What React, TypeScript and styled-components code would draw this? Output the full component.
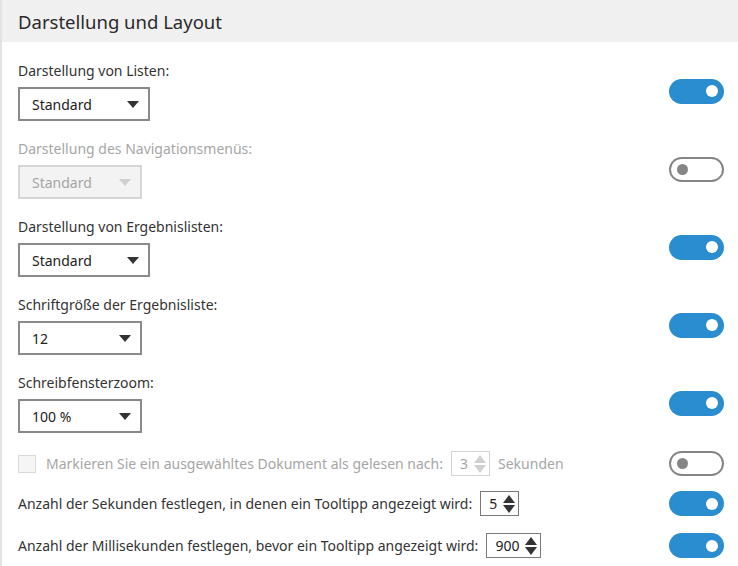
import styled, {createGlobalStyle} from "styled-components"

const GlobalStyle = createGlobalStyle`
    html, body {
        margin: 0;
        padding: 0;
        background: #fff;
    }
    body {
        font-family: "Noto Sans", "Open Sans", sans-serif;
        color: #333;
    }
`

const Panel = styled.div`
    width: 738px;
    height: 566px;
    box-sizing: border-box;
    border-left: 2px solid #e3e3e3;
    overflow: hidden;
`

const Header = styled.div`
    height: 42px;
    display: flex;
    align-items: center;
    padding-left: 16px;
    background: #f0f0f0;
    font-size: 18.5px;
    color: #2b2b2b;
`

const Body = styled.div`
    display: flex;
    flex-direction: column;
    padding: 19px 14px 0 16px;
`

const Row = styled.div<{$space: number}>`
    display: flex;
    align-items: center;
    justify-content: space-between;
    margin-bottom: ${(p) => p.$space}px;
`

const Field = styled.div`
    display: flex;
    flex-direction: column;
    gap: 6px;
`

const Label = styled.div<{$disabled?: boolean}>`
    font-size: 14px;
    line-height: 20px;
    color: ${(p) => (p.$disabled ? "#a6a6a6" : "#333")};
`

const SelectBox = styled.div<{$width: number; $disabled?: boolean}>`
    width: ${(p) => p.$width}px;
    height: 34px;
    box-sizing: border-box;
    border: 2px solid ${(p) => (p.$disabled ? "#d6d6d6" : "#8a8a8a")};
    background: ${(p) => (p.$disabled ? "#f3f3f3" : "#fff")};
    display: flex;
    align-items: center;
    justify-content: space-between;
    padding: 0 9px 0 12px;
    font-size: 14px;
    color: ${(p) => (p.$disabled ? "#a6a6a6" : "#222")};
`

const Caret = styled.span<{$disabled?: boolean}>`
    width: 0;
    height: 0;
    border-left: 6px solid transparent;
    border-right: 6px solid transparent;
    border-top: 7px solid ${(p) => (p.$disabled ? "#d0d0d0" : "#333")};
`

const Toggle = styled.div<{$on: boolean}>`
    width: 55px;
    height: 25px;
    box-sizing: border-box;
    border-radius: 13px;
    flex-shrink: 0;
    display: flex;
    align-items: center;
    justify-content: ${(p) => (p.$on ? "flex-end" : "flex-start")};
    padding: 0 6px;
    background: ${(p) => (p.$on ? "#2a8dd0" : "#fff")};
    border: ${(p) => (p.$on ? "none" : "2px solid #858585")};
`

const Knob = styled.span<{$on: boolean}>`
    width: ${(p) => (p.$on ? 12 : 11)}px;
    height: ${(p) => (p.$on ? 12 : 11)}px;
    border-radius: 50%;
    background: ${(p) => (p.$on ? "#fff" : "#858585")};
`

const Inline = styled.div<{$disabled?: boolean}>`
    display: flex;
    align-items: center;
    gap: 8px;
    font-size: 14px;
    color: ${(p) => (p.$disabled ? "#a6a6a6" : "#333")};
`

const Checkbox = styled.span`
    width: 18px;
    height: 18px;
    box-sizing: border-box;
    border: 1px solid #d9d9d9;
    background: #f5f5f5;
    margin-right: 2px;
`

const NumberBox = styled.div<{$disabled?: boolean}>`
    height: 25px;
    box-sizing: border-box;
    border: 1px solid ${(p) => (p.$disabled ? "#d4d4d4" : "#7a7a7a")};
    display: flex;
    align-items: center;
    gap: 6px;
    padding: 0 3px 0 8px;
    font-size: 14px;
    color: ${(p) => (p.$disabled ? "#a6a6a6" : "#222")};
`

const Spinner = styled.span<{$disabled?: boolean}>`
    display: flex;
    flex-direction: column;
    gap: 2px;

    &::before,
    &::after {
        content: "";
        width: 0;
        height: 0;
        border-left: 6px solid transparent;
        border-right: 6px solid transparent;
    }
    &::before {
        border-bottom: 8px solid ${(p) => (p.$disabled ? "#d0d0d0" : "#333")};
    }
    &::after {
        border-top: 8px solid ${(p) => (p.$disabled ? "#d0d0d0" : "#333")};
    }
`

type SelectRow = {
    label: string
    value: string
    width: number
    on: boolean
    disabled?: boolean
}

const selectRows: SelectRow[] = [
    {label: "Darstellung von Listen:", value: "Standard", width: 132, on: true},
    {
        label: "Darstellung des Navigationsmenüs:",
        value: "Standard",
        width: 124,
        on: false,
        disabled: true,
    },
    {label: "Darstellung von Ergebnislisten:", value: "Standard", width: 132, on: true},
    {label: "Schriftgröße der Ergebnisliste:", value: "12", width: 124, on: true},
    {label: "Schreibfensterzoom:", value: "100 %", width: 124, on: true},
]

const Switch = ({on}: {on: boolean}) => (
    <Toggle $on={on}>
        <Knob $on={on} />
    </Toggle>
)

export default function App() {
    return (
        <>
            <GlobalStyle />
            <Panel>
                <Header>Darstellung und Layout</Header>
                <Body>
                    {selectRows.map((r) => (
                        <Row key={r.label} $space={18}>
                            <Field>
                                <Label $disabled={r.disabled}>{r.label}</Label>
                                <SelectBox $width={r.width} $disabled={r.disabled}>
                                    {r.value}
                                    <Caret $disabled={r.disabled} />
                                </SelectBox>
                            </Field>
                            <Switch on={r.on} />
                        </Row>
                    ))}
                    <Row $space={15}>
                        <Inline $disabled>
                            <Checkbox />
                            Markieren Sie ein ausgewähltes Dokument als gelesen nach:
                            <NumberBox $disabled>
                                3
                                <Spinner $disabled />
                            </NumberBox>
                            Sekunden
                        </Inline>
                        <Switch on={false} />
                    </Row>
                    <Row $space={17}>
                        <Inline>
                            Anzahl der Sekunden festlegen, in denen ein Tooltipp angezeigt wird:
                            <NumberBox>
                                5
                                <Spinner />
                            </NumberBox>
                        </Inline>
                        <Switch on />
                    </Row>
                    <Row $space={0}>
                        <Inline>
                            Anzahl der Millisekunden festlegen, bevor ein Tooltipp angezeigt wird:
                            <NumberBox>
                                900
                                <Spinner />
                            </NumberBox>
                        </Inline>
                        <Switch on />
                    </Row>
                </Body>
            </Panel>
        </>
    )
}
